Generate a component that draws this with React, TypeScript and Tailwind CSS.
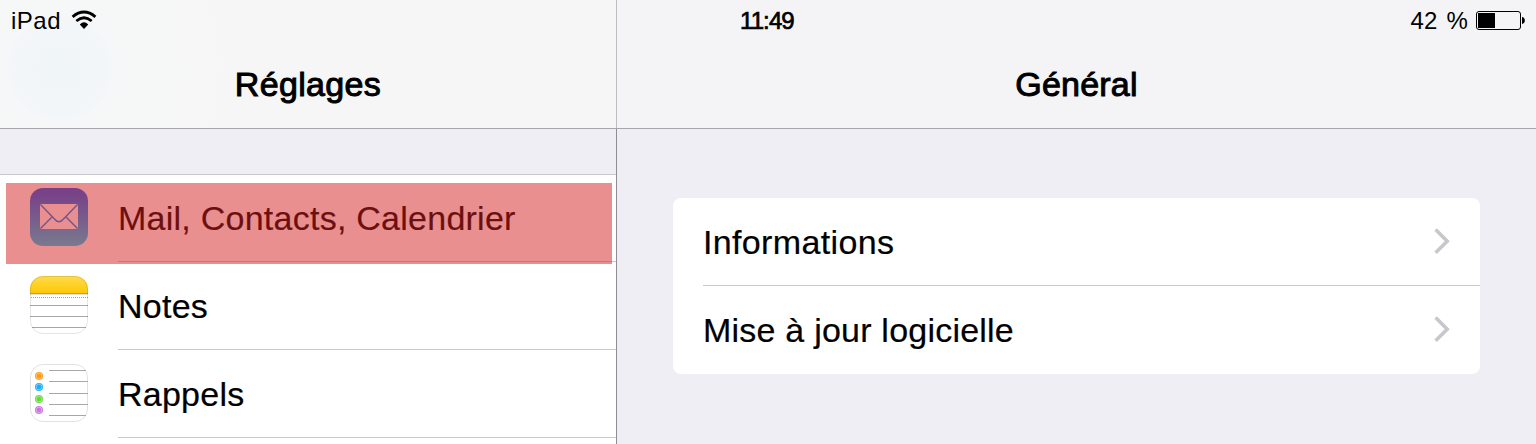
import React from 'react';

const MailIcon: React.FC = () => (
  <svg width="58" height="58" viewBox="0 0 58 58" fill="none">
    <defs>
      <linearGradient id="mail-bg" x1="0" y1="0" x2="0" y2="1">
        <stop offset="0.08" stopColor="#1a62f0" />
        <stop offset="1" stopColor="#1ad5fd" />
      </linearGradient>
    </defs>
    <rect width="58" height="58" rx="13" fill="url(#mail-bg)" />
    <rect x="10" y="16" width="38" height="25" rx="1" fill="#fff" />
    <path d="M10.5 16.5L24.5 31Q29 36.5 33.5 31L47.5 16.5M10.5 40.5L22.2 28.7M47.5 40.5L35.8 28.7" stroke="#1a8cf5" strokeWidth="1.5" />
  </svg>
);

const NotesIcon: React.FC = () => (
  <svg width="58" height="58" viewBox="0 0 58 58" fill="none">
    <defs>
      <linearGradient id="notes-top" x1="0" y1="0" x2="0" y2="1">
        <stop offset="0" stopColor="#ffdb4d" />
        <stop offset="1" stopColor="#fdc806" />
      </linearGradient>
      <clipPath id="notes-clip">
        <rect width="58" height="58" rx="13" />
      </clipPath>
    </defs>
    <g clipPath="url(#notes-clip)">
      <rect width="58" height="58" fill="#fff" />
      <rect width="58" height="17" fill="url(#notes-top)" />
      <path d="M0 17.5H58" stroke="#c9a227" />
      <path d="M0 18.5H58" stroke="#e3e0d8" />
      <path d="M1 21.5H58" stroke="#a5a5a5" strokeDasharray="1 1" />
      <path d="M0 29.5H58M0 40.5H58M2 51.5H56" stroke="#a7a7a7" />
    </g>
    <rect x="0.5" y="0.5" width="57" height="57" rx="12.5" stroke="#000" strokeOpacity="0.1" />
  </svg>
);

const bullets = [
  { y: 12, color: '#ff9a14' },
  { y: 23, color: '#1badf8' },
  { y: 35, color: '#63da38' },
  { y: 46, color: '#cc73e1' },
];

const RemindersIcon: React.FC = () => (
  <svg width="58" height="58" viewBox="0 0 58 58" fill="none">
    <rect x="0.5" y="0.5" width="57" height="57" rx="12.5" fill="#fff" stroke="#e2e2e2" />
    <path d="M19 6.5H56M19 17.5H58M19 29.5H58M19 40.5H58M19 51.5H56" stroke="#a7a7a7" />
    {bullets.map((b) => (
      <g key={b.y}>
        <circle cx="9" cy={b.y} r="4" fill={b.color} />
        <circle cx="9" cy={b.y} r="2.9" stroke="#fff" strokeOpacity="0.5" strokeWidth="0.8" />
      </g>
    ))}
  </svg>
);

const WifiIcon: React.FC = () => (
  <svg width="26" height="20" viewBox="0 0 26 20" fill="none">
    <path d="M1.6 6.8Q13 -2.6 24.4 6.8" stroke="#000" strokeWidth="2.9" />
    <path d="M5.3 11.1Q13 4.4 20.7 11.1" stroke="#000" strokeWidth="2.7" />
    <path d="M8.8 14.4Q13 10.2 17.2 14.4L13 19Z" fill="#000" />
  </svg>
);

const BatteryIcon: React.FC = () => (
  <svg width="50" height="20" viewBox="0 0 50 20" fill="none">
    <rect x="0.5" y="0.5" width="44" height="18" rx="2.5" stroke="#000" strokeWidth="1" />
    <rect x="2" y="2" width="17" height="15" fill="#000" />
    <path d="M46 6C49.8 6.3 49.8 12.7 46 13Z" fill="#000" />
  </svg>
);

const Chevron: React.FC = () => (
  <svg width="18" height="28" viewBox="0 0 18 28" fill="none" className="mt-[29px] mr-[29px]">
    <path d="M2.6 2.6L14.2 14.2L2.6 25.8" stroke="#c7c7cc" strokeWidth="3.6" />
  </svg>
);

const apps = [
  { label: 'Mail, Contacts, Calendrier', icon: <MailIcon /> },
  { label: 'Notes', icon: <NotesIcon /> },
  { label: 'Rappels', icon: <RemindersIcon /> },
];

const Sidebar: React.FC = () => (
  <aside className="flex w-[617px] shrink-0 flex-col">
    <header className="h-[129px] border-b border-[#a5a5aa] bg-[#f6f6f6] bg-[radial-gradient(circle_at_60px_68px,#f0f5f8_0px,#f2f6f8_42px,#f5f7f8_55px,#f6f7f7_110px,#f6f6f6_200px)]">
      <div className="h-[128px] border-r border-[#bdbdc0]">
        <div className="flex h-[41px] pl-[11px] text-[24px] leading-[41px]">
          <span className="w-[50px] tracking-[0.5px]">iPad</span>
          <span className="mt-[10px] ml-[10px]"><WifiIcon /></span>
        </div>
        <h1 className="text-center text-[34px] leading-[87px] tracking-[0.35px] [-webkit-text-stroke:1px_black]">Réglages</h1>
      </div>
    </header>

    <div className="flex-1 border-r border-[#8e8e93] pt-[45px]">
      <ul className="relative h-[270px] bg-white shadow-[inset_0_1px_0_#c8c7cc]">
        {apps.map((app) => (
          <li key={app.label} className="flex h-[88px] pl-[30px]">
            <span className="mt-[14px] w-[88px]">{app.icon}</span>
            <span className="h-[88px] flex-1 border-b border-[#c8c7cc] text-[34px] leading-[88px] tracking-[0.25px] [-webkit-text-stroke:0.2px_black]">
              {app.label}
            </span>
          </li>
        ))}
        {/* Highlighted row */}
        <li className="absolute top-[9px] left-[6px] h-[81px] w-[606px] bg-[#d62020]/50" />
      </ul>
    </div>
  </aside>
);

const Detail: React.FC = () => (
  <main className="flex-1">
    <header className="h-[129px] border-b border-[#a5a5aa] bg-[#f4f4f6]">
      <div className="flex h-[41px] justify-between pr-[10px] pl-[123px] text-[24px] leading-[41px]">
        <span className="tracking-[-0.9px] [-webkit-text-stroke:0.7px_black]">11:49</span>
        <div className="flex">
          <span className="tracking-[0.2px] [word-spacing:2px]">42 %</span>
          <span className="mt-[11px] ml-[8px]"><BatteryIcon /></span>
        </div>
      </div>
      <h2 className="text-center text-[34px] leading-[87px] tracking-[0.2px] [-webkit-text-stroke:1px_black]">Général</h2>
    </header>

    <ul className="mx-[56px] mt-[69px] rounded-[8px] bg-white pl-[30px] text-[34px] leading-[88px] [-webkit-text-stroke:0.2px_black]">
      <li className="flex h-[88px] justify-between border-b border-[#c8c7cc] tracking-[0.35px]">
        Informations
        <Chevron />
      </li>
      <li className="flex h-[88px] justify-between tracking-[0.22px]">
        Mise à jour logicielle
        <Chevron />
      </li>
    </ul>
  </main>
);

export default function App() {
  return (
    <div className="flex h-[444px] w-[1536px] overflow-hidden bg-[#efeef4] font-['Liberation_Sans',Arial,sans-serif] text-black">
      <Sidebar />
      <Detail />
    </div>
  );
}
